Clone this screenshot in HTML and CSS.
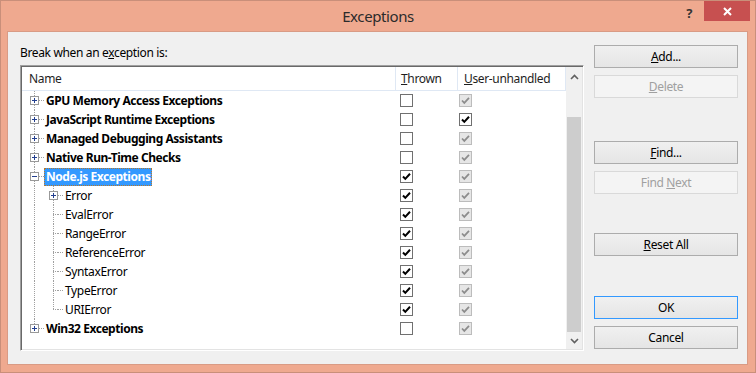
FILE: index.html
```html
<!DOCTYPE html>
<html>
<head>
  <link rel="stylesheet" href="styles.css">
</head>
<body>
  <div class="window">
    <div class="titlebar">
      <span class="title">Exceptions</span>
      <div class="controls">
        <span class="help">?</span>
        <button class="close">
          <svg width="9" height="9" viewBox="0 0 9 9"><path d="M1 1L8 8M8 1L1 8" stroke="#fff" stroke-width="2"/></svg>
        </button>
      </div>
    </div>
    <div class="client">
      <div class="left">
        <div class="caption">Break when an e<u>x</u>ception is:</div>
        <div class="list">
          <div class="table">
            <div class="head">
              <div class="c name-h">Name</div>
              <div class="c thrown-h"><u>T</u>hrown</div>
              <div class="c user-h"><u>U</u>ser-unhandled</div>
            </div>

            <div class="row l0">
              <div class="name"><span class="stem"><i class="up"></i><svg class="box" width="9" height="9"><rect x=".5" y=".5" width="8" height="8" fill="#fff" stroke="#999"/><path d="M2 4.5h5M4.5 2v5" stroke="#233f8f"/></svg><i class="dn"></i></span><i class="arm"></i><span class="lbl">GPU Memory Access Exceptions</span></div>
              <div class="thrown"><svg width="13" height="13"><rect x=".5" y=".5" width="12" height="12" fill="#fff" stroke="#707070"/></svg></div>
              <div class="user"><svg width="13" height="13"><rect x=".5" y=".5" width="12" height="12" fill="#e6e6e6" stroke="#bcbcbc"/><path d="M3 6.5l2.3 2.4L10 3.8" fill="none" stroke="#8c8c8c" stroke-width="1.7"/></svg></div>
            </div>

            <div class="row l0">
              <div class="name"><span class="stem"><i class="up"></i><svg class="box" width="9" height="9"><rect x=".5" y=".5" width="8" height="8" fill="#fff" stroke="#999"/><path d="M2 4.5h5M4.5 2v5" stroke="#233f8f"/></svg><i class="dn"></i></span><i class="arm"></i><span class="lbl">JavaScript Runtime Exceptions</span></div>
              <div class="thrown"><svg width="13" height="13"><rect x=".5" y=".5" width="12" height="12" fill="#fff" stroke="#707070"/></svg></div>
              <div class="user"><svg width="13" height="13"><rect x=".5" y=".5" width="12" height="12" fill="#fff" stroke="#707070"/><path d="M3 6.5l2.3 2.4L10 3.8" fill="none" stroke="#000" stroke-width="2"/></svg></div>
            </div>

            <div class="row l0">
              <div class="name"><span class="stem"><i class="up"></i><svg class="box" width="9" height="9"><rect x=".5" y=".5" width="8" height="8" fill="#fff" stroke="#999"/><path d="M2 4.5h5M4.5 2v5" stroke="#233f8f"/></svg><i class="dn"></i></span><i class="arm"></i><span class="lbl">Managed Debugging Assistants</span></div>
              <div class="thrown"><svg width="13" height="13"><rect x=".5" y=".5" width="12" height="12" fill="#fff" stroke="#707070"/></svg></div>
              <div class="user"><svg width="13" height="13"><rect x=".5" y=".5" width="12" height="12" fill="#e6e6e6" stroke="#bcbcbc"/><path d="M3 6.5l2.3 2.4L10 3.8" fill="none" stroke="#8c8c8c" stroke-width="1.7"/></svg></div>
            </div>

            <div class="row l0">
              <div class="name"><span class="stem"><i class="up"></i><svg class="box" width="9" height="9"><rect x=".5" y=".5" width="8" height="8" fill="#fff" stroke="#999"/><path d="M2 4.5h5M4.5 2v5" stroke="#233f8f"/></svg><i class="dn"></i></span><i class="arm"></i><span class="lbl">Native Run-Time Checks</span></div>
              <div class="thrown"><svg width="13" height="13"><rect x=".5" y=".5" width="12" height="12" fill="#fff" stroke="#707070"/></svg></div>
              <div class="user"><svg width="13" height="13"><rect x=".5" y=".5" width="12" height="12" fill="#e6e6e6" stroke="#bcbcbc"/><path d="M3 6.5l2.3 2.4L10 3.8" fill="none" stroke="#8c8c8c" stroke-width="1.7"/></svg></div>
            </div>

            <div class="row l0">
              <div class="name"><span class="stem"><i class="up"></i><svg class="box" width="9" height="9"><rect x=".5" y=".5" width="8" height="8" fill="#fff" stroke="#999"/><path d="M2 4.5h5" stroke="#233f8f"/></svg><i class="dn"></i></span><i class="arm"></i><span class="lbl selected">Node.js Exceptions</span></div>
              <div class="thrown"><svg width="13" height="13"><rect x=".5" y=".5" width="12" height="12" fill="#fff" stroke="#707070"/><path d="M3 6.5l2.3 2.4L10 3.8" fill="none" stroke="#000" stroke-width="2"/></svg></div>
              <div class="user"><svg width="13" height="13"><rect x=".5" y=".5" width="12" height="12" fill="#e6e6e6" stroke="#bcbcbc"/><path d="M3 6.5l2.3 2.4L10 3.8" fill="none" stroke="#8c8c8c" stroke-width="1.7"/></svg></div>
            </div>

            <div class="row l1">
              <div class="name"><i class="guide"></i><span class="stem"><i class="up"></i><svg class="box" width="9" height="9"><rect x=".5" y=".5" width="8" height="8" fill="#fff" stroke="#999"/><path d="M2 4.5h5M4.5 2v5" stroke="#233f8f"/></svg><i class="dn"></i></span><i class="arm"></i><span class="lbl">Error</span></div>
              <div class="thrown"><svg width="13" height="13"><rect x=".5" y=".5" width="12" height="12" fill="#fff" stroke="#707070"/><path d="M3 6.5l2.3 2.4L10 3.8" fill="none" stroke="#000" stroke-width="2"/></svg></div>
              <div class="user"><svg width="13" height="13"><rect x=".5" y=".5" width="12" height="12" fill="#e6e6e6" stroke="#bcbcbc"/><path d="M3 6.5l2.3 2.4L10 3.8" fill="none" stroke="#8c8c8c" stroke-width="1.7"/></svg></div>
            </div>

            <div class="row l1">
              <div class="name"><i class="guide"></i><span class="stem leaf"><i class="up"></i><i class="knot"></i><i class="dn"></i></span><i class="arm"></i><span class="lbl">EvalError</span></div>
              <div class="thrown"><svg width="13" height="13"><rect x=".5" y=".5" width="12" height="12" fill="#fff" stroke="#707070"/><path d="M3 6.5l2.3 2.4L10 3.8" fill="none" stroke="#000" stroke-width="2"/></svg></div>
              <div class="user"><svg width="13" height="13"><rect x=".5" y=".5" width="12" height="12" fill="#e6e6e6" stroke="#bcbcbc"/><path d="M3 6.5l2.3 2.4L10 3.8" fill="none" stroke="#8c8c8c" stroke-width="1.7"/></svg></div>
            </div>

            <div class="row l1">
              <div class="name"><i class="guide"></i><span class="stem leaf"><i class="up"></i><i class="knot"></i><i class="dn"></i></span><i class="arm"></i><span class="lbl">RangeError</span></div>
              <div class="thrown"><svg width="13" height="13"><rect x=".5" y=".5" width="12" height="12" fill="#fff" stroke="#707070"/><path d="M3 6.5l2.3 2.4L10 3.8" fill="none" stroke="#000" stroke-width="2"/></svg></div>
              <div class="user"><svg width="13" height="13"><rect x=".5" y=".5" width="12" height="12" fill="#e6e6e6" stroke="#bcbcbc"/><path d="M3 6.5l2.3 2.4L10 3.8" fill="none" stroke="#8c8c8c" stroke-width="1.7"/></svg></div>
            </div>

            <div class="row l1">
              <div class="name"><i class="guide"></i><span class="stem leaf"><i class="up"></i><i class="knot"></i><i class="dn"></i></span><i class="arm"></i><span class="lbl">ReferenceError</span></div>
              <div class="thrown"><svg width="13" height="13"><rect x=".5" y=".5" width="12" height="12" fill="#fff" stroke="#707070"/><path d="M3 6.5l2.3 2.4L10 3.8" fill="none" stroke="#000" stroke-width="2"/></svg></div>
              <div class="user"><svg width="13" height="13"><rect x=".5" y=".5" width="12" height="12" fill="#e6e6e6" stroke="#bcbcbc"/><path d="M3 6.5l2.3 2.4L10 3.8" fill="none" stroke="#8c8c8c" stroke-width="1.7"/></svg></div>
            </div>

            <div class="row l1">
              <div class="name"><i class="guide"></i><span class="stem leaf"><i class="up"></i><i class="knot"></i><i class="dn"></i></span><i class="arm"></i><span class="lbl">SyntaxError</span></div>
              <div class="thrown"><svg width="13" height="13"><rect x=".5" y=".5" width="12" height="12" fill="#fff" stroke="#707070"/><path d="M3 6.5l2.3 2.4L10 3.8" fill="none" stroke="#000" stroke-width="2"/></svg></div>
              <div class="user"><svg width="13" height="13"><rect x=".5" y=".5" width="12" height="12" fill="#e6e6e6" stroke="#bcbcbc"/><path d="M3 6.5l2.3 2.4L10 3.8" fill="none" stroke="#8c8c8c" stroke-width="1.7"/></svg></div>
            </div>

            <div class="row l1">
              <div class="name"><i class="guide"></i><span class="stem leaf"><i class="up"></i><i class="knot"></i><i class="dn"></i></span><i class="arm"></i><span class="lbl">TypeError</span></div>
              <div class="thrown"><svg width="13" height="13"><rect x=".5" y=".5" width="12" height="12" fill="#fff" stroke="#707070"/><path d="M3 6.5l2.3 2.4L10 3.8" fill="none" stroke="#000" stroke-width="2"/></svg></div>
              <div class="user"><svg width="13" height="13"><rect x=".5" y=".5" width="12" height="12" fill="#e6e6e6" stroke="#bcbcbc"/><path d="M3 6.5l2.3 2.4L10 3.8" fill="none" stroke="#8c8c8c" stroke-width="1.7"/></svg></div>
            </div>

            <div class="row l1">
              <div class="name"><i class="guide"></i><span class="stem leaf last"><i class="up"></i><i class="knot"></i><i class="dn"></i></span><i class="arm"></i><span class="lbl">URIError</span></div>
              <div class="thrown"><svg width="13" height="13"><rect x=".5" y=".5" width="12" height="12" fill="#fff" stroke="#707070"/><path d="M3 6.5l2.3 2.4L10 3.8" fill="none" stroke="#000" stroke-width="2"/></svg></div>
              <div class="user"><svg width="13" height="13"><rect x=".5" y=".5" width="12" height="12" fill="#e6e6e6" stroke="#bcbcbc"/><path d="M3 6.5l2.3 2.4L10 3.8" fill="none" stroke="#8c8c8c" stroke-width="1.7"/></svg></div>
            </div>

            <div class="row l0">
              <div class="name"><span class="stem last"><i class="up"></i><svg class="box" width="9" height="9"><rect x=".5" y=".5" width="8" height="8" fill="#fff" stroke="#999"/><path d="M2 4.5h5M4.5 2v5" stroke="#233f8f"/></svg><i class="dn"></i></span><i class="arm"></i><span class="lbl">Win32 Exceptions</span></div>
              <div class="thrown"><svg width="13" height="13"><rect x=".5" y=".5" width="12" height="12" fill="#fff" stroke="#707070"/></svg></div>
              <div class="user"><svg width="13" height="13"><rect x=".5" y=".5" width="12" height="12" fill="#e6e6e6" stroke="#bcbcbc"/><path d="M3 6.5l2.3 2.4L10 3.8" fill="none" stroke="#8c8c8c" stroke-width="1.7"/></svg></div>
            </div>
          </div>
          <div class="scrollbar">
            <div class="arrow up-arrow"><svg width="9" height="6"><path d="M1 5L4.5 1.5L8 5" fill="none" stroke="#606060" stroke-width="1.6"/></svg></div>
            <div class="track"><div class="thumb"></div></div>
            <div class="arrow"><svg width="9" height="6"><path d="M1 1L4.5 4.5L8 1" fill="none" stroke="#606060" stroke-width="1.6"/></svg></div>
          </div>
        </div>
      </div>
      <div class="buttons">
        <button class="btn"><u>A</u>dd...</button>
        <button class="btn off delete"><u>D</u>elete</button>
        <button class="btn find"><u>F</u>ind...</button>
        <button class="btn off next">Find <u>N</u>ext</button>
        <button class="btn reset"><u>R</u>eset All</button>
        <button class="btn default ok">OK</button>
        <button class="btn cancel">Cancel</button>
      </div>
    </div>
  </div>
</body>
</html>
```

FILE: styles.css
```css
* {
  box-sizing: border-box;
}

body {
  margin: 0;
  font-family: "Segoe UI", "Noto Sans", sans-serif;
  font-size: 12px;
  letter-spacing: -0.35px;
  color: #000;
}

.window {
  width: 756px;
  height: 373px;
  background-color: #efa98f;
  border: 1px solid #c98f7a;
  display: flex;
  flex-direction: column;
}

.titlebar {
  height: 30px;
  display: grid;
  grid-template-columns: 1fr auto 1fr;
}

.title {
  grid-column: 2;
  font-size: 15px;
  letter-spacing: -0.4px;
  line-height: 30px;
  color: #2b2b2b;
}

.controls {
  justify-self: end;
  display: flex;
  align-items: flex-start;
}

.help {
  font-weight: bold;
  font-size: 13px;
  line-height: 14px;
  color: #333;
  margin: 5px 12px 0 0;
}

.close {
  width: 46px;
  height: 20px;
  margin-right: 5px;
  padding: 0;
  border: none;
  background-color: #c75050;
  display: flex;
  align-items: center;
  justify-content: center;
}

.client {
  flex: 1;
  margin: 0 7px 7px 6px;
  padding: 0 9px 0 12px;
  background-color: #f0f0f0;
  border: 1px solid #d99b85;
  display: flex;
  gap: 10px;
}

.left {
  width: 564px;
  display: flex;
  flex-direction: column;
}

.caption {
  padding-top: 13px;
  line-height: 16px;
  margin-bottom: 4px;
}

.list {
  height: 286px;
  display: flex;
  padding: 1px;
  background-color: #fff;
  border: 1px solid;
  border-color: #a0a0a0 #fff #fff #a0a0a0;
  box-shadow: inset 1px 1px 0 #696969, inset -1px -1px 0 #e3e3e3;
}

.table {
  width: 544px;
}

.head {
  display: flex;
  height: 24px;
  border-bottom: 1px solid #dfe8f4;
}

.head .c {
  line-height: 23px;
  border-right: 1px solid #dfe8f4;
  color: #1e1e1e;
}

.name-h {
  width: 374px;
  padding-left: 7px;
}

.thrown-h {
  width: 62px;
  padding-left: 5px;
}

.user-h {
  width: 108px;
  padding-left: 6px;
}

.row {
  display: flex;
  height: 19px;
}

.row .name {
  width: 374px;
  padding-left: 8px;
  display: flex;
}

.row .thrown {
  width: 62px;
  padding: 3px 0 0 4px;
}

.row .user {
  width: 108px;
  padding: 3px 0 0 1px;
}

.row svg {
  display: block;
}

.stem {
  width: 9px;
  display: flex;
  flex-direction: column;
  align-items: center;
}

.stem .up, .stem .dn, .guide {
  flex: 1;
  width: 1px;
  background-image: linear-gradient(#a0a0a0 50%, transparent 50%);
  background-size: 1px 2px;
}

.stem.last .dn {
  background: none;
}

.stem .box {
  flex: none;
}

.stem .knot {
  width: 5px;
  height: 1px;
  align-self: flex-end;
  background-image: linear-gradient(to right, #a0a0a0 50%, transparent 50%);
  background-size: 2px 1px;
}

.guide {
  flex: none;
  width: 19px;
  background-repeat: repeat-y;
  background-position: 4px 0;
}

.arm {
  width: 5px;
  height: 1px;
  align-self: center;
  background-image: linear-gradient(to right, #a0a0a0 50%, transparent 50%);
  background-size: 2px 1px;
}

.lbl {
  align-self: center;
  line-height: 16px;
  padding: 0 1px;
  border: 1px dotted transparent;
  white-space: nowrap;
}

.l0 .lbl {
  font-weight: bold;
  letter-spacing: -0.45px;
}

.lbl.selected {
  background-color: #3399ff;
  color: #fff;
  border-color: #b8782a;
}

.scrollbar {
  width: 16px;
  background-color: #f0f0f0;
  display: flex;
  flex-direction: column;
}

.arrow {
  height: 17px;
  display: flex;
  align-items: center;
  justify-content: center;
}

.up-arrow {
  padding-top: 3px;
}

.track {
  flex: 1;
  padding: 33px 1px 0 1px;
  display: flex;
}

.thumb {
  flex: 1;
  background-color: #cdcdcd;
}

.buttons {
  width: 144px;
  padding-top: 13px;
  display: flex;
  flex-direction: column;
}

.btn {
  height: 23px;
  padding: 0;
  font: inherit;
  letter-spacing: inherit;
  color: #000;
  border: 1px solid #acacac;
  background: linear-gradient(#f0f0f0, #e5e5e5);
}

.btn.off {
  color: #a0a0a0;
  border-color: #d9d9d9;
  background: #f4f4f4;
}

.btn.default {
  border-color: #3399ff;
}

.delete, .next, .cancel {
  margin-top: 7px;
}

.find {
  margin-top: 43px;
}

.reset {
  margin-top: 39px;
}

.ok {
  margin-top: 40px;
}
```
